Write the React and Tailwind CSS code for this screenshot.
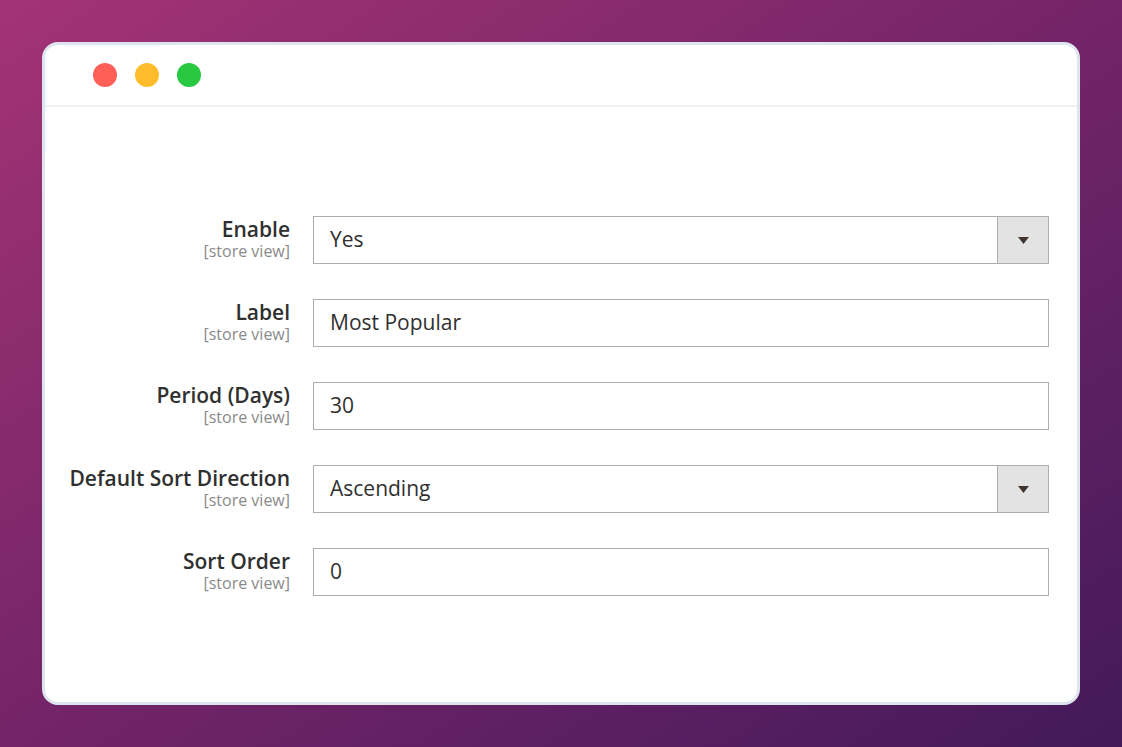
export default function App() {
  const rows = [
    { label: "Enable", value: "Yes", select: true },
    { label: "Label", value: "Most Popular" },
    { label: "Period (Days)", value: "30" },
    { label: "Default Sort Direction", value: "Ascending", select: true },
    { label: "Sort Order", value: "0" },
  ];

  return (
    <div
      className="w-[1122px] h-[747px] pt-[42px] pl-[42px] bg-gradient-to-br from-[#a33375] via-[#742468] to-[#43195a]"
      style={{ fontFamily: '"Open Sans", "Liberation Sans", sans-serif' }}
    >
      <div className="w-[1038px] h-[663px] bg-white border-[3px] border-[#dfe5ee] rounded-[16px] overflow-hidden">
        {/* window chrome */}
        <div className="h-[62px] flex items-center gap-[18px] pl-[48px] border-b-2 border-[#eeeff1]">
          <span className="w-6 h-6 rounded-full bg-[#ff5f57]" />
          <span className="w-6 h-6 rounded-full bg-[#ffbd2e]" />
          <span className="w-6 h-6 rounded-full bg-[#28c840]" />
        </div>

        {/* settings form */}
        <div className="pt-[109px] flex flex-col gap-[35px]">
          {rows.map((r) => (
            <div key={r.label} className="flex items-start">
              <div className="w-[245px] flex flex-col items-end">
                <span className="text-[21px] leading-[26px] font-semibold text-[#303030]">
                  {r.label}
                </span>
                <span className="text-[16px] leading-[19px] text-[#8a8a8a]">
                  [store view]
                </span>
              </div>
              <div className="ml-[23px] w-[736px] h-[48px] flex border border-[#adadad] bg-white">
                <div className="flex-1 flex items-center pl-[16px] text-[21px] text-[#303030]">
                  {r.value}
                </div>
                {r.select && (
                  <div className="w-[51px] h-full flex items-center justify-center bg-[#e3e3e3] border-l border-[#adadad]">
                    <svg width="11" height="7" viewBox="0 0 11 7">
                      <path d="M0 0 H11 L5.5 7 Z" fill="#41362f" />
                    </svg>
                  </div>
                )}
              </div>
            </div>
          ))}
        </div>
      </div>
    </div>
  );
}
